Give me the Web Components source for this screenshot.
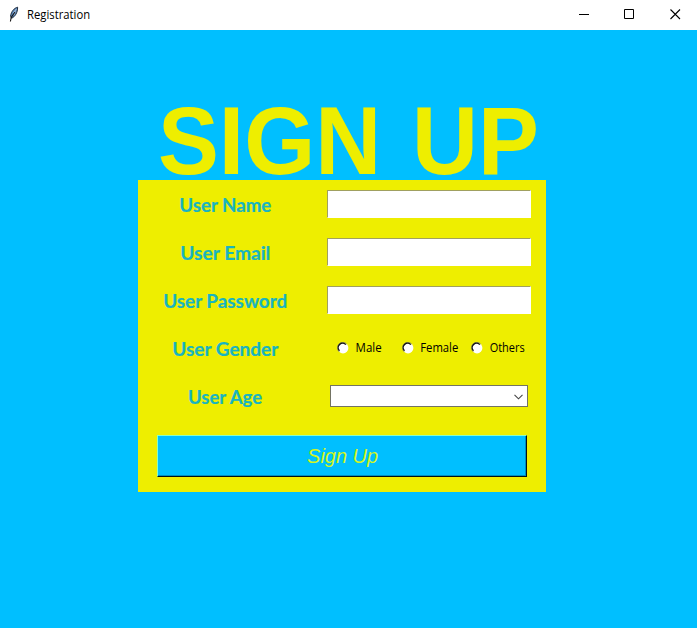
<!DOCTYPE html>
<html lang="en">
<head>
<meta charset="utf-8">
<title>Registration</title>
<style>
html,body{margin:0;height:100%;overflow:hidden}
body{font-family:"Open Sans","Noto Sans",sans-serif;font-size:12px;color:#000}
</style>
</head>
<body>
<app-window></app-window>
<script>
const define=(name,html,after)=>customElements.define(name,class extends HTMLElement{
  connectedCallback(){
    if(this.shadowRoot)return;
    const t=document.createElement('template');
    t.innerHTML=html;
    this.attachShadow({mode:'open'}).append(t.content.cloneNode(true));
    if(after)after(this);
  }
});

/* Text run stretched horizontally to the width given in its "width" attribute. */
define('fit-text',`<style>
:host{display:flex;justify-content:center;white-space:nowrap;line-height:1}
span{display:block;flex:none;transform-origin:50% 50%}
</style><span><slot></slot></span>`,el=>{
  const w=+el.getAttribute('width'),s=el.shadowRoot.querySelector('span');
  el.style.width=w+'px';
  s.style.transform=`scaleX(${w/s.getBoundingClientRect().width})`;
});

define('title-bar',`<style>
:host{display:flex;align-items:center;height:30px;background:#fff}
.feather{width:14px;height:18px;margin-left:7px;margin-top:-2px}
fit-text{margin-left:6px}
.controls{display:flex;margin-left:auto}
.controls svg{width:45.5px;height:30px;display:block}
</style>
<svg class="feather" viewBox="0 0 14 18"><path d="M10.6 2.2C7.3 3 4.2 6.5 3.6 11L4.5 13.2C7.8 12 10.8 7.5 10.6 2.2Z" fill="#5b86b8" stroke="#1c2a3c" stroke-width="1"/><path d="M9.3 4L6.5 8M8.6 6.5L6.8 10" stroke="#a9c4e2" fill="none"/><path d="M8 7L4.2 12.5L3.4 16.5" stroke="#141414" fill="none" stroke-width="1.1"/></svg>
<fit-text width="63">Registration</fit-text>
<div class="controls">
<svg viewBox="0 0 45.5 30"><path d="M18 14.5h10" stroke="#000"/></svg>
<svg viewBox="0 0 45.5 30"><path d="M18.5 9.5h9v9h-9z" fill="none" stroke="#000"/></svg>
<svg viewBox="0 0 45.5 30"><path d="M18.5 9.5l9.5 9.5M28 9.5l-9.5 9.5" stroke="#000" stroke-width="1.1"/></svg>
</div>`);

define('form-row',`<style>
:host{display:grid;grid-template-columns:174px 234px;height:48px;align-items:center;justify-items:center}
.label{color:#18b4c0;font:bold 18px Lato,"Open Sans",sans-serif;-webkit-text-stroke:.2px #18b4c0;padding-top:1px}
.field{display:flex;align-items:center;justify-content:center;width:100%}
</style><div class="label"><slot name="label"></slot></div><div class="field"><slot></slot></div>`);

define('text-entry',`<style>
:host{display:block;width:204px;height:28px;box-sizing:border-box;background:#fff;border:1px solid;border-color:#a0a060 #fff #fff #a0a060}
</style>`);

define('radio-option',`<style>
:host{display:flex;align-items:center;gap:6.5px}
svg{width:12px;height:12px;display:block;margin-top:-1px}
</style><svg viewBox="0 0 12 12"><circle cx="6" cy="6" r="5.4" fill="#fff"/><path d="M2 9.6A5.3 5.3 0 0 1 9.6 1.9" fill="none" stroke="#8f8f50" stroke-width="1"/><path d="M2.5 8.7A4.3 4.3 0 0 1 8.8 2.6" fill="none" stroke="#111" stroke-width="1.3"/></svg><slot></slot>`);

define('radio-group',`<style>
:host{display:flex;width:100%;padding-left:25px;box-sizing:border-box;height:20px;align-items:center}
radio-option+radio-option{margin-left:20.5px}
radio-option:last-of-type{margin-left:12.5px}
</style>
<radio-option><fit-text width="26">Male</fit-text></radio-option>
<radio-option><fit-text width="38">Female</fit-text></radio-option>
<radio-option><fit-text width="35">Others</fit-text></radio-option>`);

define('combo-box',`<style>
:host{display:flex;align-items:center;justify-content:flex-end;width:198px;height:22px;box-sizing:border-box;background:#fff;border:1px solid #737363}
svg{width:9px;height:6px;margin-right:4px;margin-top:2px}
</style><svg viewBox="0 0 9 6"><path d="M.5 .8l4 4 4-4" fill="none" stroke="#444" stroke-width="1.1"/></svg>`);

define('push-button',`<style>
:host{display:flex;align-items:center;justify-content:center;width:370px;height:42px;box-sizing:border-box;background:#00bfff;border:1px solid;border-color:#88ffc4 #001018 #001018 #88ffc4;box-shadow:inset -1px -1px #008fbe;color:#d4f522;font:italic 20px "Liberation Sans",Arial,sans-serif;padding-left:2px}
</style><slot></slot>`);

define('signup-form',`<style>
:host{display:block;width:408px;height:312px;background:#eeee00}
push-button{margin:15px 0 0 19px}
</style>
<form-row><fit-text slot="label" width="92">User Name</fit-text><text-entry></text-entry></form-row>
<form-row><fit-text slot="label" width="90">User Email</fit-text><text-entry></text-entry></form-row>
<form-row><fit-text slot="label" width="124">User Password</fit-text><text-entry></text-entry></form-row>
<form-row><fit-text slot="label" width="106">User Gender</fit-text><radio-group></radio-group></form-row>
<form-row><fit-text slot="label" width="74">User Age</fit-text><combo-box></combo-box></form-row>
<push-button><fit-text width="71">Sign Up</fit-text></push-button>`);

define('app-window',`<style>
:host{display:flex;flex-direction:column;height:628px;background:#00bfff}
main{padding-left:138px}
.heading{width:420px;height:88px;padding-top:62px;display:flex;justify-content:center;color:#eeee00;font:bold 97px "Liberation Sans",Arial,sans-serif;word-spacing:6px}
</style><title-bar></title-bar><main><div class="heading"><fit-text width="381">SIGN UP</fit-text></div><signup-form></signup-form></main>`);
</script>
</body>
</html>
